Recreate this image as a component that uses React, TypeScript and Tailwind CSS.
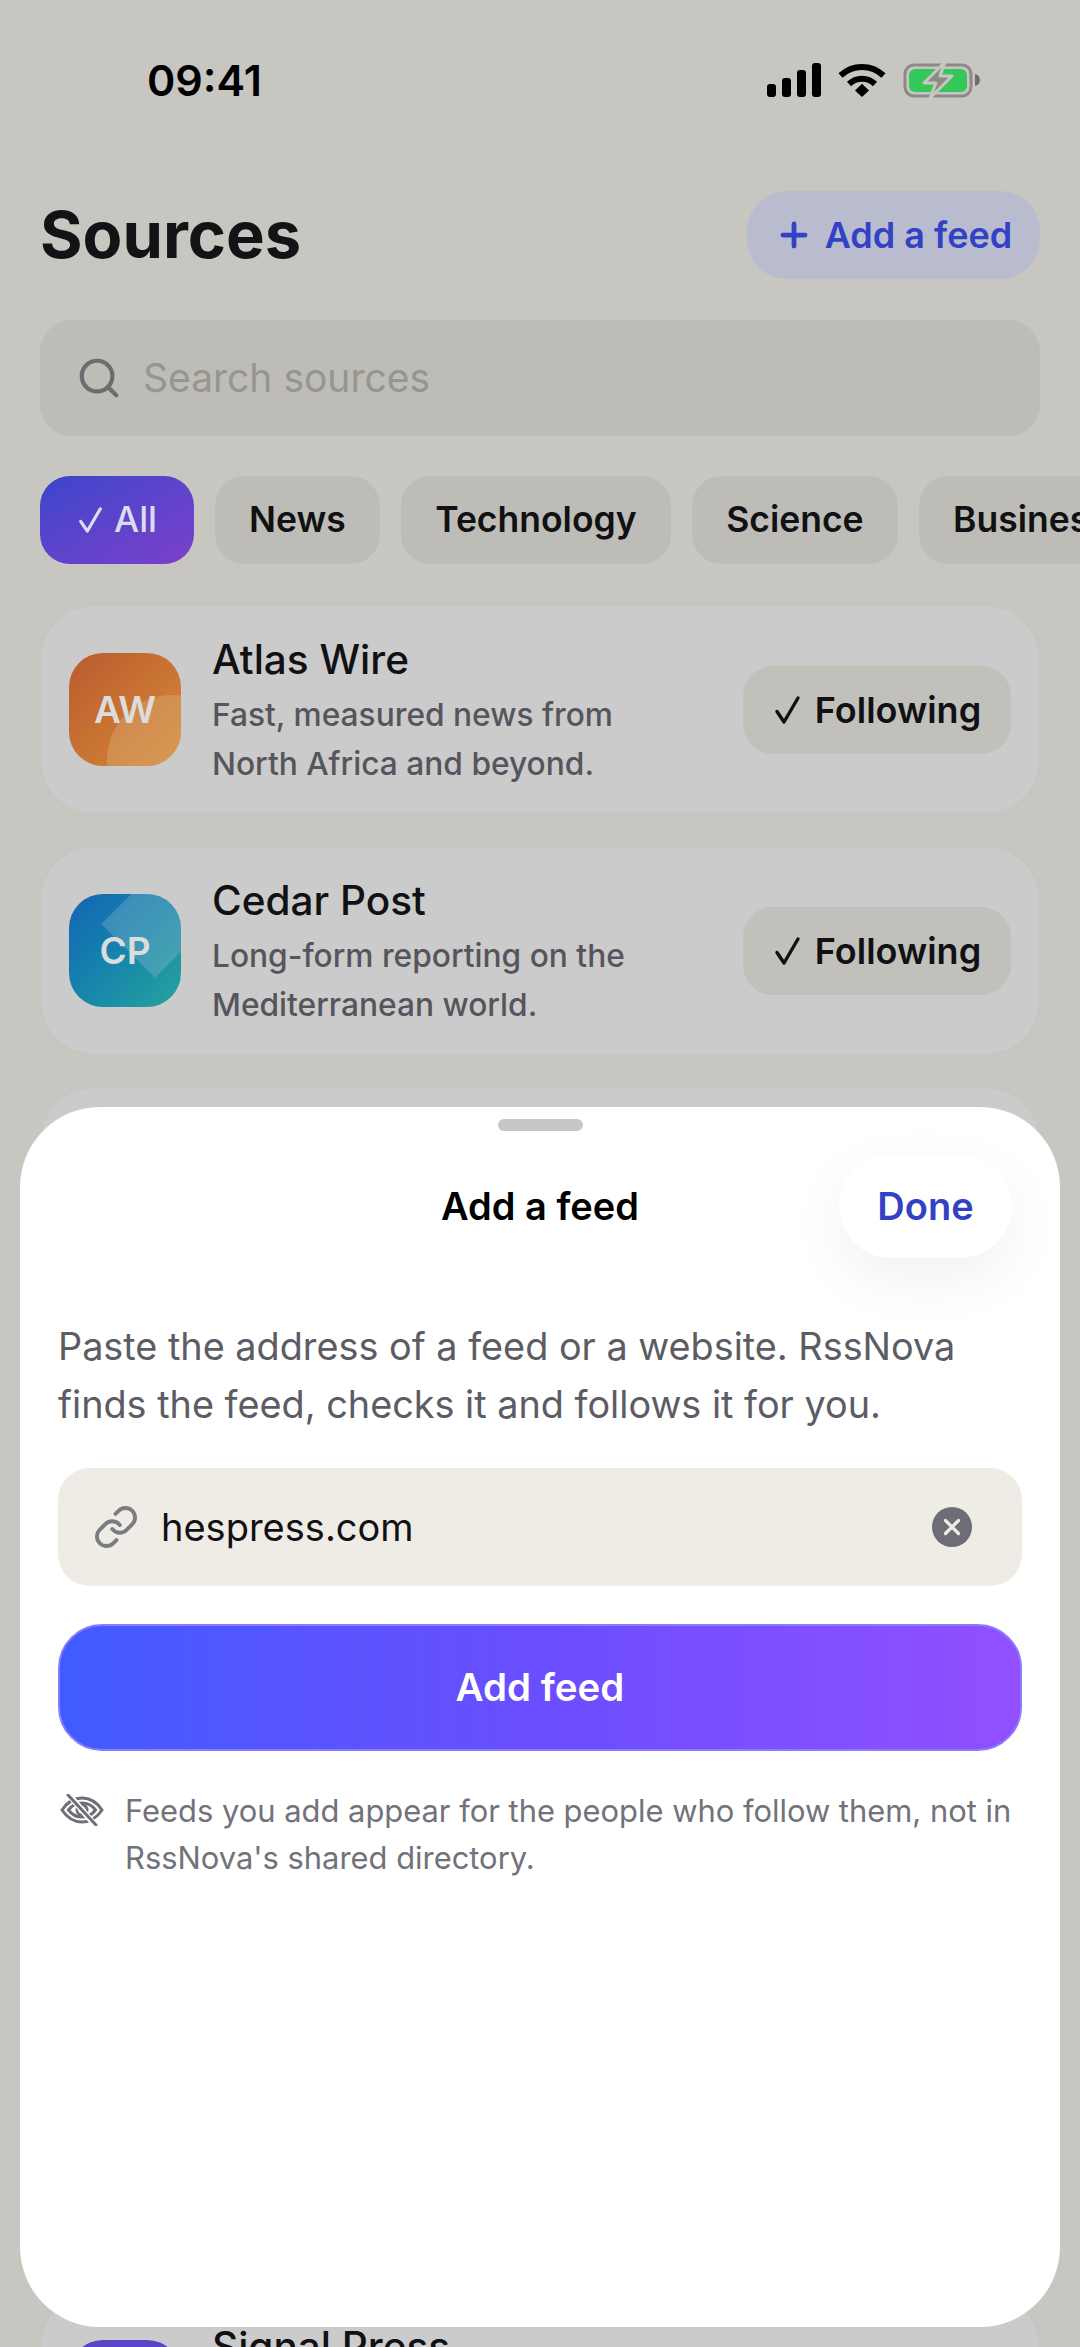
import { Link, Plus, Search, X } from "lucide-react";

const chips = ["News", "Technology", "Science", "Business"];

const SignalBars = () => (
    <svg width="54" height="34" viewBox="0 0 54 34" fill="#000">
        <rect x="0" y="21" width="9" height="13" rx="3" />
        <rect x="15" y="15" width="9" height="19" rx="3" />
        <rect x="30" y="7" width="9" height="27" rx="3" />
        <rect x="45" y="0" width="9" height="34" rx="3" />
    </svg>
);

const Wifi = () => (
    <svg width="48" height="34" viewBox="0 0 48 34" fill="none" stroke="#000" strokeWidth="6">
        <path d="M2.5 12.5C14.5 1 33.5 1 45.5 12.5" />
        <path d="M11 21C18.5 14 29.500 14 37 21" />
        <path d="M17 27.500L24 20.800L31 27.500L24 34Z" fill="#000" stroke="none" />
    </svg>
);

const Battery = () => (
    <svg width="78" height="36" viewBox="0 0 78 36" fill="none">
        <rect x="2" y="3" width="66" height="31" rx="9" stroke="#8b8a87" strokeWidth="3" />
        <rect x="6" y="7" width="58" height="23" rx="6" fill="#34c759" />
        <path d="M72 12c3 .6 5 3 5 6s-2 5.400-5 6z" fill="#6e6d6a" />
        <path d="M42 0L21 21H33L27 36L49 14H37Z" fill="#8b8a87" stroke="#c8c6c0" strokeWidth="3" strokeLinejoin="round" />
    </svg>
);

const EyeSlash = () => (
    <svg width="44" height="32" viewBox="0 0 44 32" fill="none" stroke="#6f6f76" strokeWidth="3" strokeLinecap="round">
        <path d="M2 16C8 7 15 4 22 4s14 3 20 12c-6 9-13 12-20 12S8 25 2 16Z" />
        <path d="M8.500 16C12.500 10.500 17 9 22 9s9.500 1.500 13.500 7c-4 5.500-8.500 7-13.500 7s-9.500-1.500-13.500-7Z" />
        <circle cx="22" cy="16" r="5" />
        <path d="M9 1L35 31" stroke="#fff" strokeWidth="6" />
        <path d="M8 1L36 31" />
    </svg>
);

// thin-left, long-right tick, same shape in the chip and the pills
const Check = ({ size }: { size: number }) => (
    <svg width={size} height={size} viewBox="0 0 30 30" fill="none" stroke="currentColor" strokeWidth="3.400" strokeLinecap="round" strokeLinejoin="round">
        <path d="M4 16.500L11 27L25 3" />
    </svg>
);

const SourceCard = ({
    badge,
    title,
    lines,
    following = true,
}: {
    badge: React.ReactNode;
    title: string;
    lines: string[];
    following?: boolean;
}) => (
    <div className="flex h-[209px] items-center rounded-[54px] border border-[#c5c4c0] bg-[#cbcbcb] pl-[28px] pr-[28px]">
        {badge}
        <div className="ml-[31px] h-[148px] flex-1">
            <div className="mb-[6px] text-[40.500px] leading-[48px] font-medium text-[#111114]">{title}</div>
            {lines.map(l => (
                <div key={l} className="text-[31.7px] leading-[49px] font-medium text-[#55555b]">
                    {l}
                </div>
            ))}
        </div>
        {following && (
            <div className="flex h-[88px] w-[268px] items-center justify-center gap-[12px] rounded-[30px] bg-[#c1c0ba] text-[36px] font-semibold text-[#111114]">
                <Check size={30} />
                Following
            </div>
        )}
    </div>
);

const Badge = ({
    label,
    className,
    children,
}: {
    label: string;
    className: string;
    children?: React.ReactNode;
}) => (
    <div
        className={`relative flex h-[113px] w-[112px] shrink-0 items-center justify-center overflow-hidden rounded-[34px] text-[37px] font-semibold text-[#dcdcdc] ${className}`}
    >
        {children}
        <span className="relative">{label}</span>
    </div>
);

export default function App() {
    return (
        <div className="relative h-[2347px] w-[1080px] overflow-hidden bg-[#c8c6c1] font-['Inter',sans-serif]">
            <div className="flex h-[160px] items-center justify-between pl-[147px] pr-[99px]">
                <span className="text-[43px] font-semibold text-black">09:41</span>
                <div className="flex items-center gap-[17px]">
                    <SignalBars />
                    <Wifi />
                    <Battery />
                </div>
            </div>

            <div className="mt-[31px] flex h-[88px] items-center justify-between px-[40px]">
                <h1 className="text-[65px] font-bold text-[#131316]">Sources</h1>
                <button className="flex h-[88px] w-[293px] items-center justify-center gap-[12px] rounded-[40px] bg-[#b9bccf] text-[36px] font-semibold text-[#3341c4]">
                    <Plus size={38} strokeWidth={3} />
                    Add a feed
                </button>
            </div>

            <div className="mx-[40px] mt-[41px] flex h-[116px] items-center gap-[21px] rounded-[32px] bg-[#bdbcb7] pl-[36px]">
                <Search size={46} strokeWidth={2.2} className="text-[#6c6c70]" />
                <span className="text-[39px] text-[#96958f]">Search sources</span>
            </div>

            <div className="mt-[40px] flex gap-[20.500px] pl-[40px] text-[35.5px] font-semibold text-[#111114]">
                <div className="flex h-[88px] w-[154px] shrink-0 items-center justify-center gap-[9px] rounded-[30px] bg-gradient-to-br from-[#3a45cc] to-[#7b3fcb] font-medium text-[#dcdcf0]">
                    <Check size={28} />
                    All
                </div>
                {chips.map(c => (
                    <div
                        key={c}
                        className="flex h-[88px] shrink-0 items-center rounded-[30px] bg-[#bdbcb7] px-[34.500px]"
                    >
                        {c}
                    </div>
                ))}
            </div>

            <div className="mx-[40px] mt-[41px] flex flex-col gap-[32px]">
                <SourceCard
                    title="Atlas Wire"
                    lines={["Fast, measured news from", "North Africa and beyond."]}
                    badge={
                        <Badge label="AW" className="bg-gradient-to-br from-[#b85b2e] to-[#d98a38]">
                            <div className="absolute left-[38px] top-[42px] h-[130px] w-[130px] rounded-full bg-[#d9b07a]/40" />
                        </Badge>
                    }
                />
                <SourceCard
                    title="Cedar Post"
                    lines={["Long-form reporting on the", "Mediterranean world."]}
                    badge={
                        <Badge label="CP" className="bg-gradient-to-br from-[#1664b6] to-[#27a39c]">
                            <div className="absolute left-[48px] top-[-8px] h-[76px] w-[76px] rotate-45 bg-[#9cc2d0]/30" />
                        </Badge>
                    }
                />
                <div className="h-[209px] rounded-[54px] border border-[#c5c4c0] bg-[#cbcbcb]" />
                <div className="h-[209px]" />
                <div className="h-[209px]" />
                <div className="h-[209px]" />
                <div className="h-[209px]" />
                <SourceCard
                    title="Signal Press"
                    lines={[]}
                    following={false}
                    badge={<Badge label="" className="bg-[#5945c7]" />}
                />
            </div>

            <div className="absolute left-[20px] top-[1107px] h-[1220px] w-[1040px] rounded-[80px] bg-white px-[38px]">
                <div className="mx-auto mt-[12px] h-[12px] w-[85px] rounded-full bg-[#c7c7c9]" />
                <div className="mt-[23px] grid h-[104px] grid-cols-[1fr_auto_1fr] items-center">
                    <div />
                    <h2 className="text-[38px] font-semibold text-black">Add a feed</h2>
                    <button className="ml-auto mr-[10px] h-[104px] w-[173px] rounded-full bg-white text-[38px] font-semibold text-[#3341c4] shadow-[0_20px_60px_rgba(0,0,0,0.06)]">
                        Done
                    </button>
                </div>
                <p className="mt-[59px] text-[37.8px] leading-[58px] text-[#5c5c64]">
                    Paste the address of a feed or a website. RssNova finds the feed, checks it and follows it for you.
                </p>
                <div className="mt-[35px] flex h-[118px] items-center rounded-[32px] bg-[#efece6] pl-[35px] pr-[50px]">
                    <Link size={46} strokeWidth={2} className="text-[#7b7b82]" />
                    <span className="ml-[22px] flex-1 text-[38px] text-[#111114]">hespress.com</span>
                    <div className="flex h-[40px] w-[40px] items-center justify-center rounded-full bg-[#6d6d76]">
                        <X size={26} strokeWidth={3} className="text-[#efece6]" />
                    </div>
                </div>
                <button className="mt-[38px] h-[127px] w-full rounded-[44px] border-2 border-[#8a7cff] bg-gradient-to-r from-[#3f5bff] via-[#6a4dff] to-[#9250ff] text-[38.500px] font-semibold text-white">
                    Add feed
                </button>
                <div className="mt-[36px] flex">
                    <div className="mt-[7px] w-[67px] shrink-0 pl-[2px]">
                        <EyeSlash />
                    </div>
                    <p className="text-[30.900px] leading-[47px] text-[#72727a]">
                        Feeds you add appear for the people who follow them, not in RssNova's shared directory.
                    </p>
                </div>
            </div>
        </div>
    );
}
